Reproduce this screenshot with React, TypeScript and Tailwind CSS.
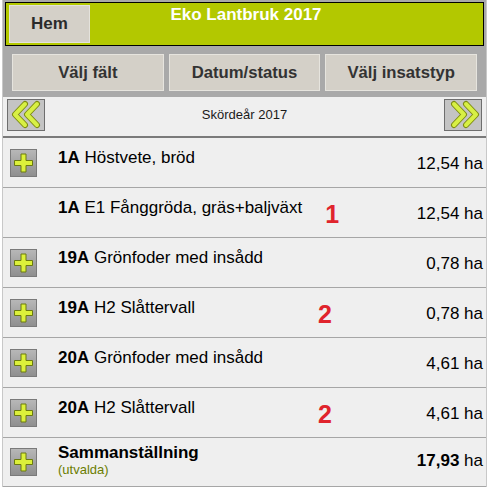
import React from 'react';

const rows = [
  { id: '1A', name: 'Höstvete, bröd', area: '12,54 ha', plus: true },
  { id: '1A', name: 'E1 Fånggröda, gräs+baljväxt', area: '12,54 ha', plus: false, mark: '1' },
  { id: '19A', name: 'Grönfoder med insådd', area: '0,78 ha', plus: true },
  { id: '19A', name: 'H2 Slåttervall', area: '0,78 ha', plus: true, mark: '2' },
  { id: '20A', name: 'Grönfoder med insådd', area: '4,61 ha', plus: true },
  { id: '20A', name: 'H2 Slåttervall', area: '4,61 ha', plus: true, mark: '2' },
];

function PlusIcon() {
  return (
    <svg width="27" height="28" viewBox="0 0 27 28" className="shrink-0">
      <defs>
        <linearGradient id="pg" x1="0" y1="0" x2="0" y2="1">
          <stop offset="0" stopColor="#b8b8b8" />
          <stop offset="1" stopColor="#8e8e8e" />
        </linearGradient>
      </defs>
      <rect x="0.5" y="0.5" width="26" height="27" fill="url(#pg)" stroke="#7a7a7a" />
      <path d="M11 5h5v6.5h6.5v5H16V23h-5v-6.5H4.5v-5H11z" fill="#dcf03a" stroke="#6b7a10" strokeWidth="1" />
    </svg>
  );
}

function Chevrons({ dir }: { dir: 'left' | 'right' }) {
  const d =
    dir === 'left'
      ? 'M17 5L7 15.5L17 26M29 5L19 15.5L29 26'
      : 'M9 5L19 15.5L9 26M21 5L31 15.5L21 26';
  return (
    <div className="flex h-[32px] w-[38px] items-center justify-center border border-[#6e6e6e] bg-[#c4c4c4]">
      <svg width="36" height="31" viewBox="0 0 36 31">
        <path d={d} fill="none" stroke="#7d8c12" strokeWidth="6" strokeLinecap="round" strokeLinejoin="round" />
        <path d={d} fill="none" stroke="#d8f044" strokeWidth="4" strokeLinecap="round" strokeLinejoin="round" />
      </svg>
    </div>
  );
}

export default function App() {
  return (
    <div className="h-[487px] w-[488px] overflow-hidden bg-white font-['Liberation_Sans',Arial,sans-serif]">
      <div className="ml-[2px] flex h-[487px] w-[485px] flex-col border-x border-[#c8c8c8] bg-[#efefef]">
        {/* header */}
        <div className="bg-[#a9a9a9] px-[2px] pt-[2px]">
          <div className="grid h-[44px] grid-cols-[82px_1fr_82px] border border-black bg-[#b3c800] pl-[3px] pt-[2px]">
            <button className="h-[38px] w-[81px] border border-[#e4e2dc] bg-[#d4d0c8] text-[17px] font-bold text-[#2b2b2b]">
              Hem
            </button>
            <div className="text-center text-[17px] font-bold leading-[20px] text-white">
              Eko Lantbruk 2017
            </div>
            <div />
          </div>
          {/* toolbar */}
          <div className="flex h-[51px] gap-[5px] px-[7px] pt-[8px]">
            {['Välj fält', 'Datum/status', 'Välj insatstyp'].map((t) => (
              <button
                key={t}
                className="h-[37px] w-[153px] border border-[#e6e4de] bg-[#d4d0c8] text-[16.7px] font-bold text-[#333]"
              >
                {t}
              </button>
            ))}
          </div>
        </div>
        {/* nav */}
        <div className="flex h-[43px] items-center justify-between border-b-2 border-[#7a7a7a] bg-[#efefef] px-[4px] pb-[4px]">
          <Chevrons dir="left" />
          <div className="text-[13px] text-[#1a1a1a]">Skördeår 2017</div>
          <Chevrons dir="right" />
        </div>
        {/* rows */}
        {rows.map((r, i) => (
          <div key={i} className="flex h-[50px] shrink-0 border-b border-[#a6a6a6] pl-[7px] pr-[3px]">
            <div className="flex w-[48px] shrink-0 items-center pt-[1px]">{r.plus && <PlusIcon />}</div>
            <div className="flex flex-1 items-start pt-[7px] text-[17px] text-black">
              <span className="shrink-0 font-bold">{r.id}</span>
              <span className="shrink-0">&nbsp;{r.name}</span>
              {r.mark && <span className={r.mark === '1' ? 'w-[23px] shrink-0' : 'w-[123px] shrink-0'} />}
              {r.mark && (
                <span className="mt-[8px] shrink-0 text-[25px] font-bold leading-[22px] text-[#e0242c]">{r.mark}</span>
              )}
            </div>
            <div className="flex items-center pt-[2px] text-[17px] text-black">{r.area}</div>
          </div>
        ))}
        {/* summary */}
        <div className="flex h-[49px] shrink-0 border-b border-[#a6a6a6] pl-[7px] pr-[3px]">
          <div className="flex w-[48px] shrink-0 items-center">
            <PlusIcon />
          </div>
          <div className="flex flex-1 flex-col pt-[5px]">
            <span className="text-[17px] font-bold leading-[19px] text-black">Sammanställning</span>
            <span className="text-[13px] leading-[15px] text-[#6b7d00]">(utvalda)</span>
          </div>
          <div className="flex items-center pb-[2px] text-[17px] text-black">
            <span className="font-bold">17,93</span>&nbsp;ha
          </div>
        </div>
      </div>
    </div>
  );
}
